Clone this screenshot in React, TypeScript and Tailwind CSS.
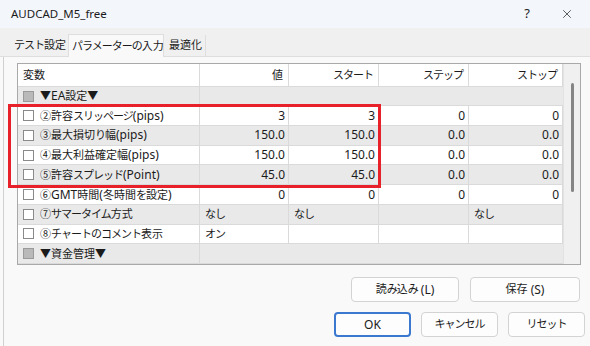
import React from 'react';
import { X } from 'lucide-react';

type Row =
  | { kind: 'group'; name: string }
  | { kind: 'param'; name: string; vals: string[]; align: 'left' | 'right' };

const rows: Row[] = [
  { kind: 'group', name: '▼EA設定▼' },
  { kind: 'param', name: '②許容スリッページ(pips)', vals: ['3', '3', '0', '0'], align: 'right' },
  { kind: 'param', name: '③最大損切り幅(pips)', vals: ['150.0', '150.0', '0.0', '0.0'], align: 'right' },
  { kind: 'param', name: '④最大利益確定幅(pips)', vals: ['150.0', '150.0', '0.0', '0.0'], align: 'right' },
  { kind: 'param', name: '⑤許容スプレッド(Point)', vals: ['45.0', '45.0', '0.0', '0.0'], align: 'right' },
  { kind: 'param', name: '⑥GMT時間(冬時間を設定)', vals: ['0', '0', '0', '0'], align: 'right' },
  { kind: 'param', name: '⑦サマータイム方式', vals: ['なし', 'なし', '', 'なし'], align: 'left' },
  { kind: 'param', name: '⑧チャートのコメント表示', vals: ['オン', '', '', ''], align: 'left' },
  { kind: 'group', name: '▼資金管理▼' },
];

// The Windows UI font draws CJK a little smaller and kana proportional, so mimic that
const J: React.FC<{ t: string }> = ({ t }) => (
  <>
    {t.split(/([\u3040-\u30ff]+|[^\x00-\x7f\u3040-\u30ff]+)/).map((s, i) => {
      if (!s) return null;
      if (/[\u3040-\u30ff]/.test(s))
        return (
          <span key={i} className="text-[11px] tracking-[-1px]">
            {s}
          </span>
        );
      if (/[^\x00-\x7f]/.test(s))
        return (
          <span key={i} className="text-[11px]">
            {s}
          </span>
        );
      return <React.Fragment key={i}>{s}</React.Fragment>;
    })}
  </>
);

const cols = 'grid grid-cols-[182px_89px_90px_90px_94px]';
const cell = 'border-r border-b border-[#dadada] flex items-center whitespace-nowrap';

const Checkbox: React.FC<{ group?: boolean }> = ({ group }) => (
  <span
    className={
      'w-[11px] h-[11px] border shrink-0 ' +
      (group ? 'bg-[#b9b9b9] border-[#9a9a9a]' : 'bg-white border-[#8a8a8a]')
    }
  />
);

const Btn: React.FC<{ label: string; w: string; primary?: boolean }> = ({ label, w, primary }) => (
  <button
    className={
      'h-[25px] rounded-[4px] bg-[#fdfdfd] text-[12px] text-[#1b1b1b] flex items-center justify-center whitespace-pre ' +
      w +
      (primary ? ' border-2 border-[#3b78d0]' : ' border border-[#d3d3d3]')
    }
  >
    <J t={label} />
  </button>
);

const App: React.FC = () => {
  return (
    <div className='relative w-[590px] h-[346px] bg-[#f9f9f9] text-[#1b1b1b] overflow-hidden flex flex-col font-["Noto_Sans","Noto_Sans_CJK_JP",sans-serif]'>
      {/* title bar */}
      <div className="h-[28px] bg-[#f3f6fb] flex items-center justify-between pl-[11px] pr-[16px] shrink-0">
        <span className="text-[11.5px]">AUDCAD_M5_free</span>
        <div className="flex items-center gap-[30px]">
          <span className="text-[13px]">?</span>
          <X size={14} strokeWidth={1.2} />
        </div>
      </div>

      {/* tabs */}
      <div className="h-[29px] bg-[#f0f0f0] flex items-end pl-[10px] shrink-0 border-b border-[#dedede] whitespace-nowrap">
        <div className="h-[21px] w-[58px] pl-[4px] flex items-center text-[12px]">
          <J t="テスト設定" />
        </div>
        <div className="h-[23px] w-[96px] pl-[3px] mb-[-1px] flex items-center text-[12px] bg-[#f9f9f9] border-t border-l border-r border-[#dedede]">
          <J t="パラメーターの入力" />
        </div>
        <div className="h-[21px] w-[42px] pl-[5px] flex items-center text-[12px] border-r border-[#dedede]">
          <J t="最適化" />
        </div>
      </div>

      {/* panel */}
      <div className="flex-1 flex flex-col border-l border-[#d0d0d0] ml-[3px]">
        <div className="mt-[6px] ml-[13px] w-[564px] h-[202px] border border-[#a9a9a9] flex text-[12px]">
          <div className="w-[545px] bg-white flex flex-col">
            <div className={cols + ' h-[23px]'}>
              <div className={cell + ' pl-[5px]'}>
                <J t="変数" />
              </div>
              {['値', 'スタート', 'ステップ', 'ストップ'].map((h) => (
                <div key={h} className={cell + ' justify-end pr-[5px]'}>
                  <J t={h} />
                </div>
              ))}
            </div>
            {rows.map((r, i) => {
              const bg = i % 2 === 0 ? 'bg-[#e9e9e9]' : 'bg-white';
              if (r.kind === 'group') {
                return (
                  <div key={r.name} className={'flex h-[20px] ' + bg}>
                    <div className={cell + ' w-[182px] pl-[5px] gap-[6px]'}>
                      <Checkbox group />
                      <span>
                        <J t={r.name} />
                      </span>
                    </div>
                    <div className="flex-1 border-b border-[#dadada]" />
                  </div>
                );
              }
              return (
                <div key={r.name} className={cols + ' h-[20px] ' + bg}>
                  <div className={cell + ' pl-[5px] gap-[6px]'}>
                    <Checkbox />
                    <span>
                      <J t={r.name} />
                    </span>
                  </div>
                  {r.vals.map((v, j) => (
                    <div
                      key={j}
                      className={cell + (r.align === 'right' ? ' justify-end pr-[3px]' : ' pl-[5px]')}
                    >
                      <J t={v} />
                    </div>
                  ))}
                </div>
              );
            })}
          </div>
          {/* scrollbar */}
          <div className="flex-1 bg-[#f0f0f0] border-l border-[#e2e2e2] flex justify-center">
            <div className="w-[3px] h-[109px] mt-[19px] bg-[#858585] rounded-full" />
          </div>
        </div>

        <div className="flex justify-end gap-[11px] pr-[10px] mt-[12px]">
          <Btn label="読み込み (L)" w="w-[108px]" />
          <Btn label="保存 (S)" w="w-[110px]" />
        </div>
        <div className="flex justify-end gap-[10px] pr-[5px] mt-[10px]">
          <Btn label="OK" w="w-[77px]" primary />
          <Btn label="キャンセル" w="w-[77px]" />
          <Btn label="リセット" w="w-[77px]" />
        </div>
      </div>

      {/* red highlight annotation */}
      <div className="absolute left-[8px] top-[104px] w-[373px] h-[84px] border-[3px] border-[#e8202a]" />
    </div>
  );
};

export default App;
